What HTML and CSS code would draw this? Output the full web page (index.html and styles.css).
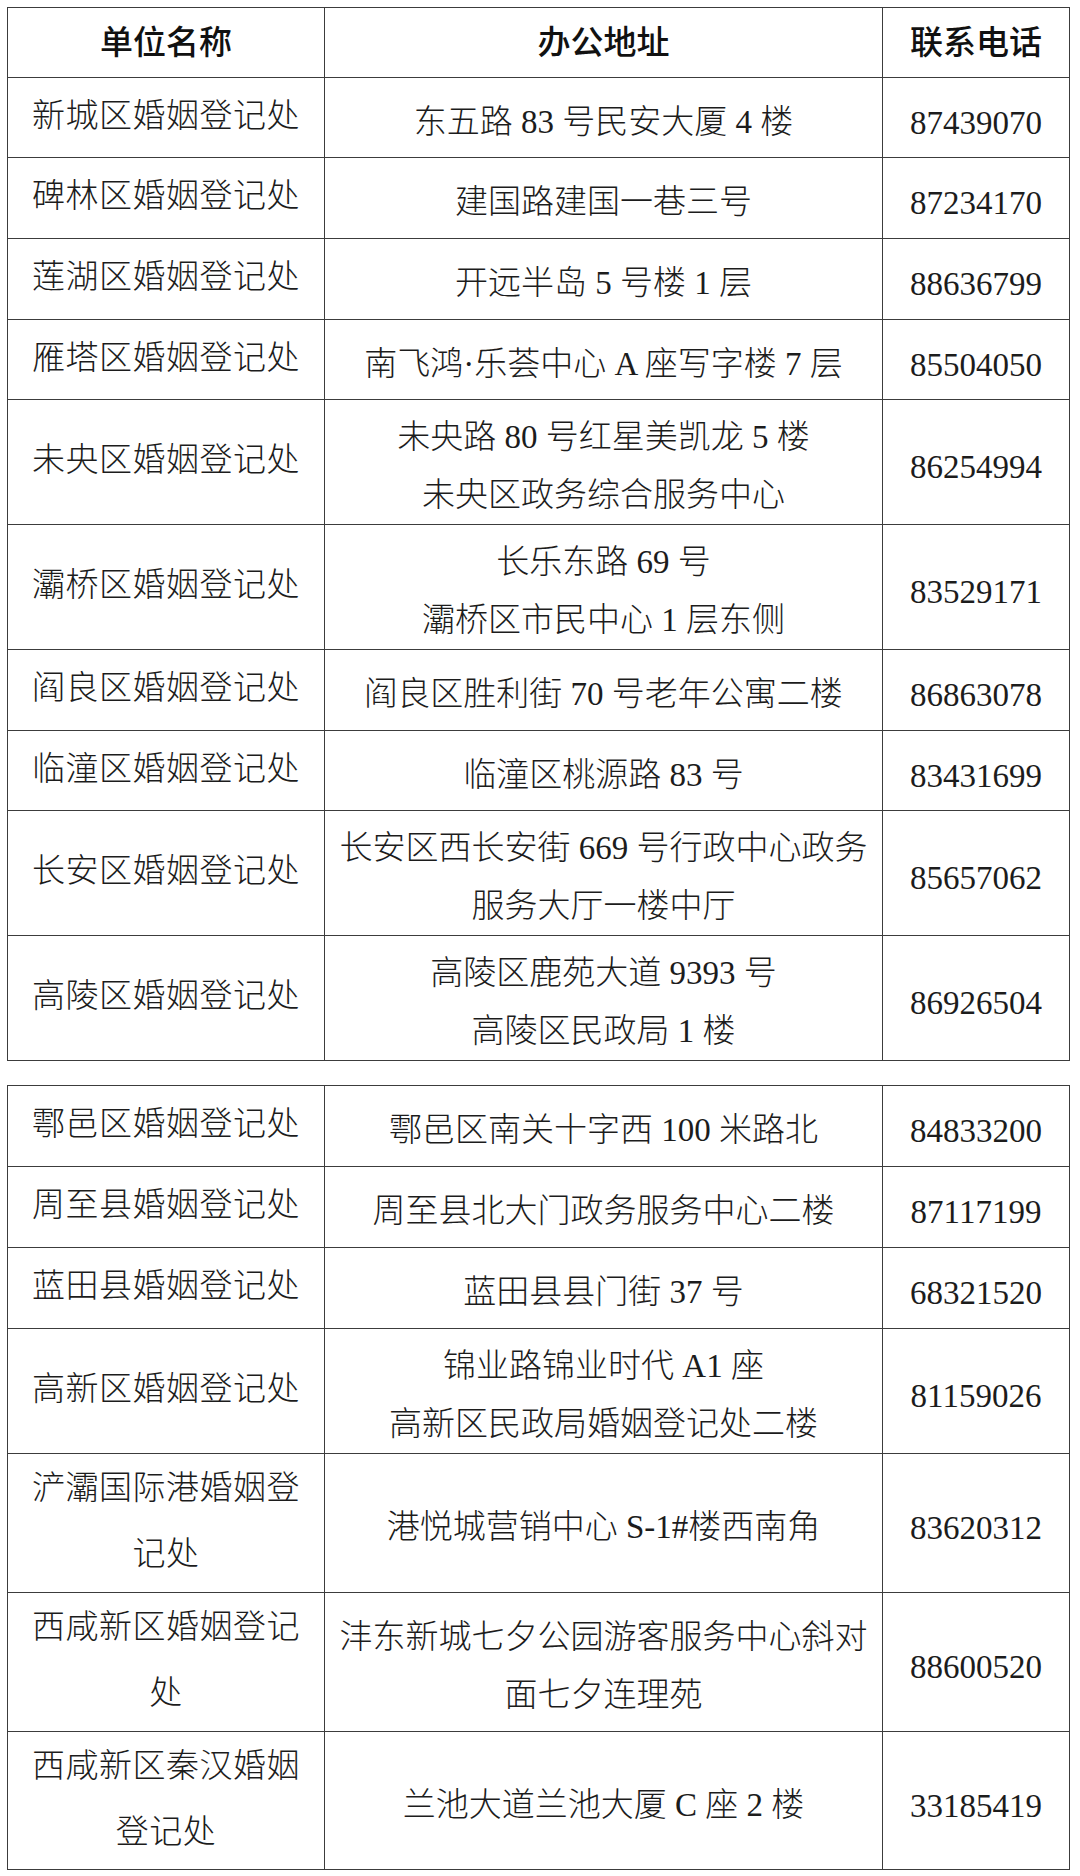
FILE: index.html
```html
<!DOCTYPE html>
<html lang="zh-CN">
<head>
<meta charset="utf-8">
<title>婚姻登记处</title>
<link rel="stylesheet" href="styles.css">
</head>
<body>
<div class="page">
  <table class="grid">
    <colgroup><col class="c-name"><col class="c-addr"><col class="c-tel"></colgroup>
    <thead>
      <tr class="head"><th>单位名称</th><th>办公地址</th><th>联系电话</th></tr>
    </thead>
    <tbody>
      <tr class="h1"><td class="name">新城区婚姻登记处</td><td class="addr">东五路 83 号民安大厦 4 楼</td><td class="tel">87439070</td></tr>
      <tr class="h1b"><td class="name">碑林区婚姻登记处</td><td class="addr">建国路建国一巷三号</td><td class="tel">87234170</td></tr>
      <tr class="h1b"><td class="name">莲湖区婚姻登记处</td><td class="addr">开远半岛 5 号楼 1 层</td><td class="tel">88636799</td></tr>
      <tr class="h1"><td class="name">雁塔区婚姻登记处</td><td class="addr">南飞鸿·乐荟中心 A 座写字楼 7 层</td><td class="tel">85504050</td></tr>
      <tr class="h2"><td class="name">未央区婚姻登记处</td><td class="addr">未央路 80 号红星美凯龙 5 楼<br>未央区政务综合服务中心</td><td class="tel">86254994</td></tr>
      <tr class="h2s"><td class="name">灞桥区婚姻登记处</td><td class="addr">长乐东路 69 号<br>灞桥区市民中心 1 层东侧</td><td class="tel">83529171</td></tr>
      <tr class="h1b"><td class="name">阎良区婚姻登记处</td><td class="addr">阎良区胜利街 70 号老年公寓二楼</td><td class="tel">86863078</td></tr>
      <tr class="h1"><td class="name">临潼区婚姻登记处</td><td class="addr">临潼区桃源路 83 号</td><td class="tel">83431699</td></tr>
      <tr class="h2s"><td class="name">长安区婚姻登记处</td><td class="addr">长安区西长安街 669 号行政中心政务<br>服务大厅一楼中厅</td><td class="tel">85657062</td></tr>
      <tr class="h2"><td class="name">高陵区婚姻登记处</td><td class="addr">高陵区鹿苑大道 9393 号<br>高陵区民政局 1 楼</td><td class="tel">86926504</td></tr>
    </tbody>
  </table>

  <table class="grid">
    <colgroup><col class="c-name"><col class="c-addr"><col class="c-tel"></colgroup>
    <tbody>
      <tr class="h1b"><td class="name">鄠邑区婚姻登记处</td><td class="addr">鄠邑区南关十字西 100 米路北</td><td class="tel">84833200</td></tr>
      <tr class="h1b"><td class="name">周至县婚姻登记处</td><td class="addr">周至县北大门政务服务中心二楼</td><td class="tel">87117199</td></tr>
      <tr class="h1b"><td class="name">蓝田县婚姻登记处</td><td class="addr">蓝田县县门街 37 号</td><td class="tel">68321520</td></tr>
      <tr class="h2"><td class="name">高新区婚姻登记处</td><td class="addr">锦业路锦业时代 A1 座<br>高新区民政局婚姻登记处二楼</td><td class="tel">81159026</td></tr>
      <tr class="h3"><td class="name">浐灞国际港婚姻登<br>记处</td><td class="addr">港悦城营销中心 S-1#楼西南角</td><td class="tel">83620312</td></tr>
      <tr class="h3"><td class="name">西咸新区婚姻登记<br>处</td><td class="addr">沣东新城七夕公园游客服务中心斜对<br>面七夕连理苑</td><td class="tel">88600520</td></tr>
      <tr class="h3b"><td class="name">西咸新区秦汉婚姻<br>登记处</td><td class="addr">兰池大道兰池大厦 C 座 2 楼</td><td class="tel">33185419</td></tr>
    </tbody>
  </table>
</div>
</body>
</html>
```

FILE: styles.css
```css
html, body {
  margin: 0;
  padding: 0;
  background: #ffffff;
}

.page {
  padding: 7px 0 0 7px;
  display: flex;
  flex-direction: column;
  gap: 24px;
  font-family: "Liberation Serif", "Noto Sans CJK SC", serif;
  font-size: 33px;
  color: #1c1c1c;
}

.grid {
  width: 1062px;
  border-collapse: collapse;
  table-layout: fixed;
}

.c-name { width: 317px; }
.c-addr { width: 558px; }
.c-tel  { width: 187px; }

.grid th,
.grid td {
  border: 1.5px solid #3c3c3c;
  text-align: center;
  vertical-align: middle;
  padding: 0;
}

.head { height: 70px; }

.head th {
  font-family: "Noto Sans CJK SC", sans-serif;
  font-weight: 500;
  font-size: 33px;
  line-height: 44px;
  color: #111;
  padding-bottom: 6px;
}

.h1  { height: 80px; }
.h1b { height: 81px; }
.h2  { height: 125px; }
.h2s { height: 124px; }
.h3  { height: 139px; }
.h3b { height: 138px; }

.grid td.name {
  font-weight: 300;
  letter-spacing: 0.5px;
  line-height: 66px;
  padding-bottom: 4px;
}

.grid td.addr {
  font-weight: 300;
  line-height: 58px;
  padding-top: 8px;
}

.grid td.tel {
  line-height: 40px;
  padding-top: 10px;
}
```
